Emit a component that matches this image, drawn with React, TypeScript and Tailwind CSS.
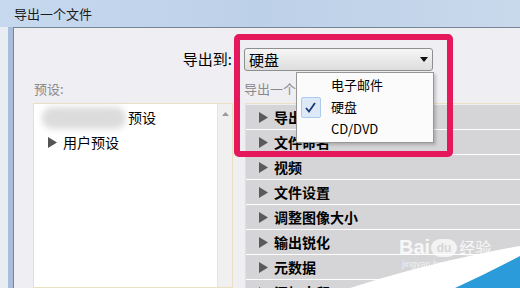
import React from 'react'

const rows = ['导出', '文件命名', '视频', '文件设置', '调整图像大小', '输出锐化', '元数据', '添加水印']

function Tri({ className = '' }: { className?: string }) {
  return (
    <svg width="9" height="11" viewBox="0 0 9 11" className={className}>
      <path d="M0 0 L9 5.5 L0 11 Z" fill="currentColor" />
    </svg>
  )
}

export default function App() {
  const font = { fontFamily: '"Noto Sans CJK SC", "Noto Sans", sans-serif' }
  return (
    <div className="relative w-[520px] h-[288px] overflow-hidden bg-[#efeef2] text-black" style={font}>
      <div className="flex flex-col h-full">
        {/* title bar */}
        <div className="h-[27px] flex items-center pl-[14px] text-[13px] text-[#1b1b1b] bg-gradient-to-r from-[#c7d9ef] via-[#bcd0e8] to-[#c9d9ec]">
          导出一个文件
        </div>
        <div className="flex flex-1 min-h-0">
          {/* frame */}
          <div className="w-[13px] flex">
            <div className="w-[8px] bg-[#e8edf4]" />
            <div className="w-[5px] bg-[#a9bedb]" />
          </div>
          {/* content */}
          <div className="flex-1 border-l border-t border-[#7a8594] bg-[#efeef2] flex flex-col pl-[19px]">
            <div className="flex items-center h-[44px] pt-[19px]">
              <div className="w-[203px] text-right text-[15px] pr-[4px]">导出到:</div>
              <div className="ml-[8px] w-[189px] h-[23px] rounded-[3px] border border-[#8e8f8f] bg-gradient-to-b from-[#f6f6f6] to-[#dedede] flex items-center justify-between px-[4px]">
                <span className="text-[15px] leading-none">硬盘</span>
                <svg width="8" height="5" viewBox="0 0 8 5"><path d="M0 0 H8 L4 5 Z" fill="#111" /></svg>
              </div>
            </div>
            <div className="flex h-[31px] items-center pt-[2px] text-[13px] text-[#8a8a8a]">
              <div className="w-[211px] pl-[1px]">预设:</div>
              <div>导出一个文件</div>
            </div>
            <div className="flex flex-1 min-h-0">
              {/* preset list */}
              <div className="w-[200px] border border-[#eadfbf] bg-white flex">
                <div className="flex-1 pt-[1px] text-[14px]">
                  <div className="flex items-center h-[25px] pl-[8px]">
                    <div className="w-[84px] h-[22px] rounded-full bg-[#dcdcdc] blur-[3px]" />
                    <span className="ml-[2px]">预设</span>
                  </div>
                  <div className="flex items-center h-[25px] pl-[14px]">
                    <Tri className="text-[#555]" />
                    <span className="ml-[6px]">用户预设</span>
                  </div>
                </div>
                <div className="w-[15px] bg-[#f0f0f0] border-l border-[#e4e4e4] flex justify-center pt-[8px]">
                  <svg width="7" height="4" viewBox="0 0 7 4"><path d="M0 4 L3.5 0 L7 4 Z" fill="#9a9a9a" /></svg>
                </div>
              </div>
              {/* sections */}
              <div className="ml-[12px] flex-1 border-l border-t border-[#eadfbf] pt-[1px]">
                {rows.map(r => (
                  <div key={r} className="h-[25px] bg-[#d5d5d7] border-b border-white flex items-center pl-[13px]">
                    <Tri className="text-[#5a5a5a]" />
                    <span className="ml-[6px] text-[14px] font-bold">{r}</span>
                  </div>
                ))}
              </div>
            </div>
          </div>
        </div>
      </div>

      {/* dropdown popup */}
      <div className="absolute left-[296px] top-[72px] w-[138px] h-[71px] bg-[#fbfbfb] border border-[#979797] shadow-[2px_2px_3px_rgba(0,0,0,0.2)] flex text-[13px]">
        <div className="w-[27px] flex flex-col items-center pt-[24px]">
          <div className="w-[20px] h-[21px] rounded-[2px] bg-[#dde9f7] border border-[#aecbee] flex items-center justify-center">
            <svg width="11" height="11" viewBox="0 0 11 11"><path d="M1 6 L4 9.5 L10 1" stroke="#1c3a7a" strokeWidth="1.8" fill="none" /></svg>
          </div>
        </div>
        <div className="flex flex-col pl-[7px] pt-[1px] leading-[22px]">
          <span>电子邮件</span>
          <span>硬盘</span>
          <span>CD/DVD</span>
        </div>
      </div>

      {/* red highlight */}
      <div className="absolute left-[234px] top-[34px] w-[219px] h-[123px] border-[6px] border-[#e5185c] rounded-[5px]" />

      {/* watermark */}
      <svg className="absolute left-0 top-0" width="520" height="288" viewBox="0 0 520 288">
        <path d="M350 288 Q430 262 520 246 L520 288 Z" fill="#ffffff" />
        <path d="M455 288 Q490 272 520 256 L520 288 Z" fill="#2b9bd9" />
      </svg>
      <div className="absolute left-[399px] top-[237px] flex items-end text-white/80 font-bold" style={{ fontFamily: '"Liberation Sans", "Noto Sans CJK SC", sans-serif' }}>
        <span className="text-[20px] leading-none">Bai</span>
        <span className="ml-[1px] w-[26px] h-[18px] rounded-full bg-white/70 text-[#d5d5d7] text-[12px] leading-[18px] text-center">du</span>
        <span className="ml-[2px] text-[16px] leading-none font-normal">经验</span>
      </div>
      <div className="absolute left-[402px] top-[258px] text-[9px] text-white/70" style={{ fontFamily: '"Liberation Sans", sans-serif' }}>jingyan.baidu.com</div>
    </div>
  )
}
